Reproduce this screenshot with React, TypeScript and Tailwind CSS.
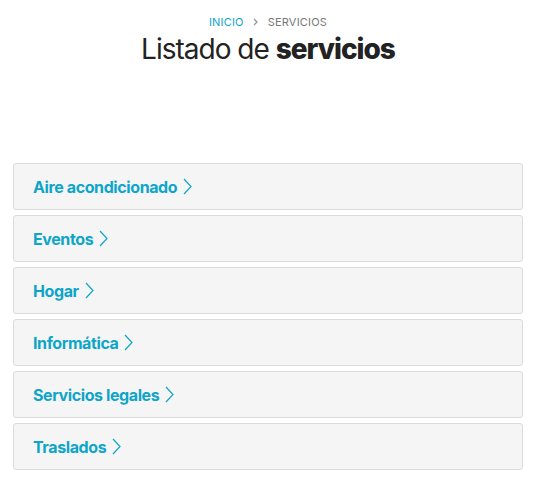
import React from "react";

const items = [
  "Aire acondicionado",
  "Eventos",
  "Hogar",
  "Informática",
  "Servicios legales",
  "Traslados",
];

function Chevron() {
  return (
    <svg width="9" height="17" viewBox="0 0 9 17" fill="none" className="ml-[6px]">
      <path d="M1 1l7 7.5-7 7.5" stroke="#0ea5c9" strokeWidth="1.2" />
    </svg>
  );
}

export default function App() {
  return (
    <div className="min-h-[491px] bg-white px-[13px]" style={{ fontFamily: "Inter, 'Noto Sans', sans-serif" }}>
      <div className="flex flex-col items-center pt-[14px]">
        <div className="flex items-center gap-[9px] text-[11px] uppercase leading-[16px] tracking-[0.2px]">
          <span className="text-[#0ea5c9]">Inicio</span>
          <svg width="6" height="8" viewBox="0 0 6 8"><path d="M1 1l3 3-3 3" stroke="#999" strokeWidth="1.4" fill="none" /></svg>
          <span className="text-[#777]">Servicios</span>
        </div>
        <h1 className="mt-[1px] text-[28px] leading-[36px] tracking-[-1px] text-[#222]">
          Listado de <span className="font-extrabold">servicios</span>
        </h1>
      </div>
      <div className="mt-[96px] flex flex-col gap-[5px]">
        {items.map((t) => (
          <div key={t} className="flex h-[47px] items-center rounded-[3px] border border-[#dcdcdc] bg-[#f5f5f5] pl-[19px]">
            <span className="text-[16px] font-bold tracking-[-0.4px] text-[#0ea5c9]">{t}</span>
            <Chevron />
          </div>
        ))}
      </div>
    </div>
  );
}
